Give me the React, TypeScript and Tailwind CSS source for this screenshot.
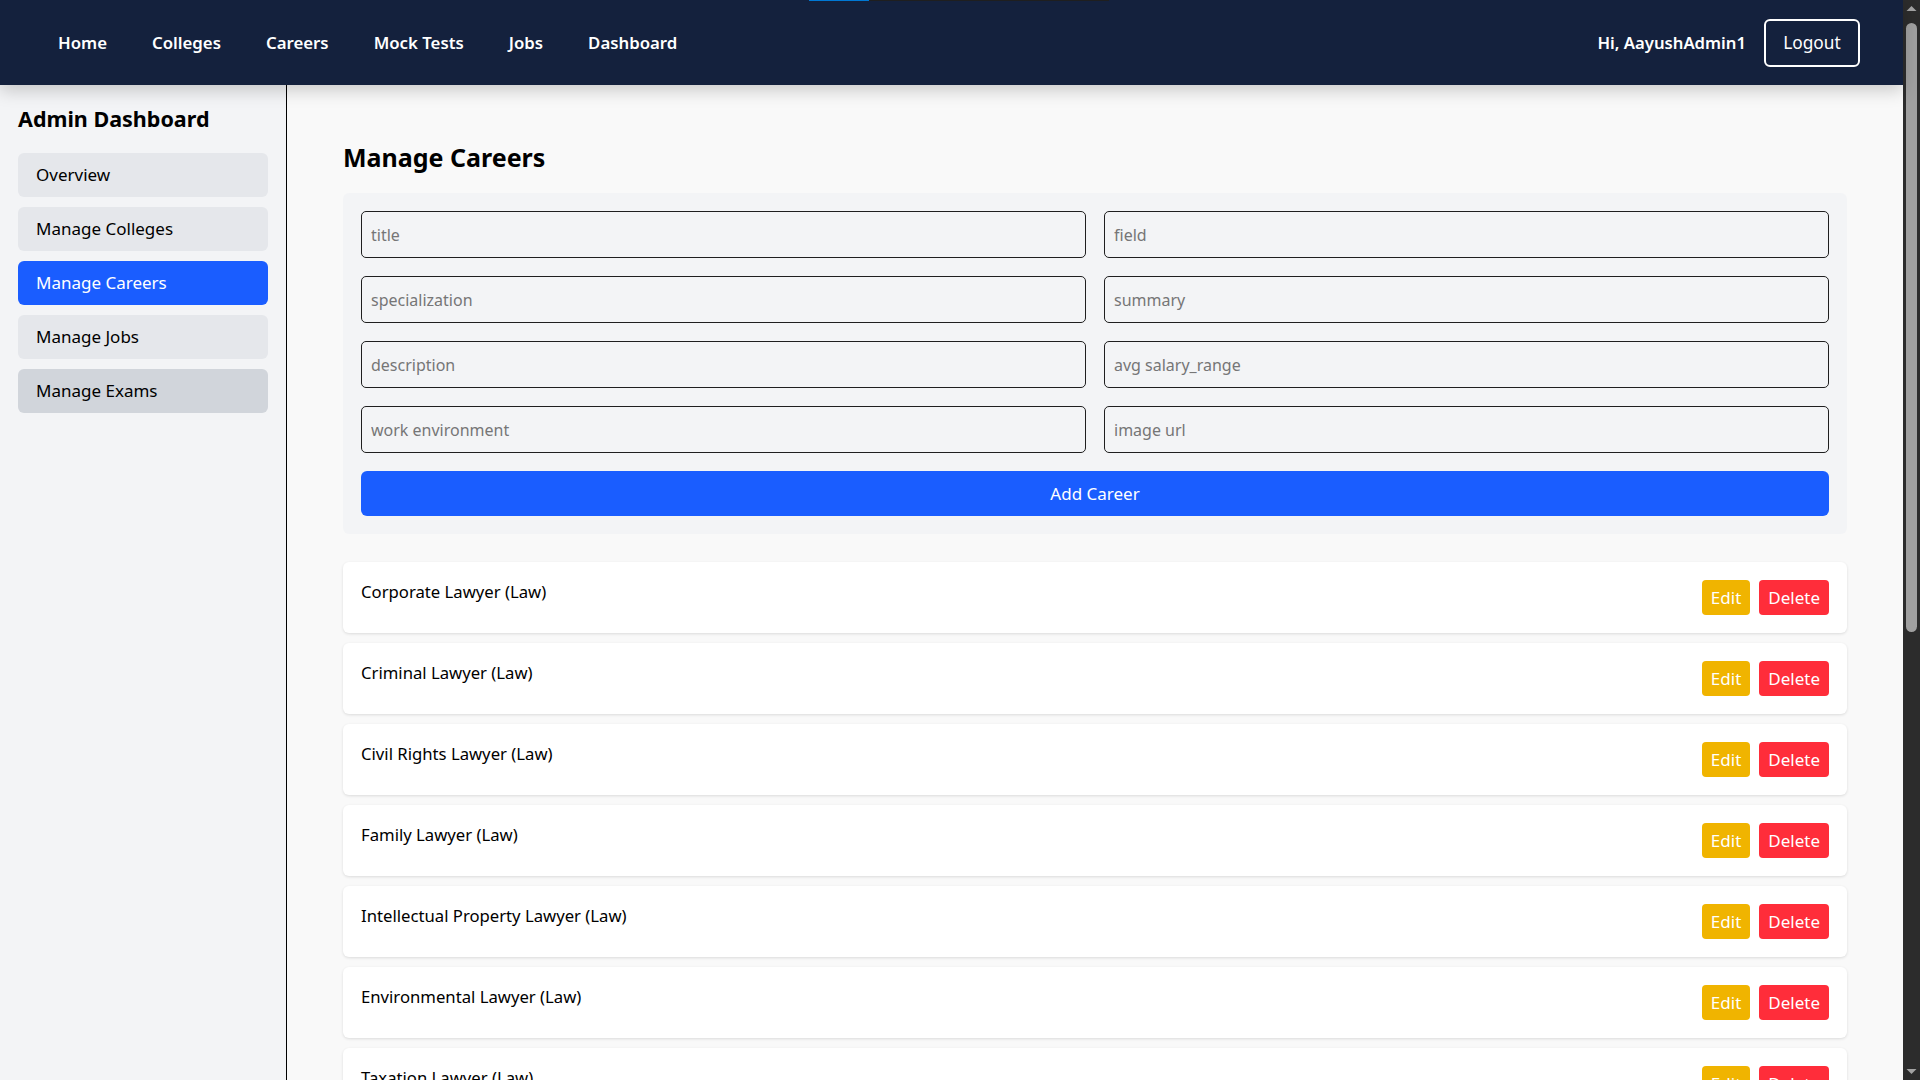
import React from "react"

const navLinks = ["Home", "Colleges", "Careers", "Mock Tests", "Jobs", "Dashboard"]

const sideItems = [
  { label: "Overview", tone: "bg-[#e5e7eb]" },
  { label: "Manage Colleges", tone: "bg-[#e5e7eb]" },
  { label: "Manage Careers", tone: "bg-[#1a5dff] text-white" },
  { label: "Manage Jobs", tone: "bg-[#e5e7eb]" },
  { label: "Manage Exams", tone: "bg-[#d1d5db]" },
]

const fields = [
  "title",
  "field",
  "specialization",
  "summary",
  "description",
  "avg salary_range",
  "work environment",
  "image url",
]

const careers = [
  "Corporate Lawyer (Law)",
  "Criminal Lawyer (Law)",
  "Civil Rights Lawyer (Law)",
  "Family Lawyer (Law)",
  "Intellectual Property Lawyer (Law)",
  "Environmental Lawyer (Law)",
  "Taxation Lawyer (Law)",
  "Immigration Lawyer (Law)",
]

export default function App() {
  return (
    <div
      className="h-screen w-full flex overflow-hidden bg-[#f9f9f9] text-black"
      style={{ fontFamily: '"Segoe UI", "Noto Sans", "Open Sans", sans-serif' }}
    >
      <div className="relative flex-1 flex flex-col min-w-0">
        {/* loading strip */}
        <div className="absolute top-0 left-[809px] h-px w-[60px] bg-[#0078d4] z-30" />
        <div className="absolute top-0 left-[869px] h-px w-[240px] bg-[#1f1f1f] z-30" />

        {/* Navbar */}
        <nav className="relative z-20 h-[85px] shrink-0 bg-[#14213d] shadow-[0_6px_16px_rgba(0,0,0,0.18)] flex items-center justify-between pl-[58px] pr-[43px]">
          <div className="flex items-center gap-[45px]">
            {navLinks.map((l) => (
              <span key={l} className="text-white text-[16.8px] font-semibold">
                {l}
              </span>
            ))}
          </div>
          <div className="flex items-center gap-[18px]">
            <span className="text-white text-[16.7px] font-semibold">Hi, AayushAdmin1</span>
            <button className="h-[48px] w-[96px] rounded-md border-2 border-white text-white text-[17.3px]">
              Logout
            </button>
          </div>
        </nav>

        <div className="flex flex-1 min-h-0">
          {/* Sidebar */}
          <aside className="w-[287px] shrink-0 bg-[#f3f4f6] border-r border-black p-[18px]">
            <h2 className="text-[21.5px] leading-8 font-bold mb-[18px]">Admin Dashboard</h2>
            <div className="flex flex-col gap-[10px]">
              {sideItems.map((s) => (
                <div key={s.label} className={`h-[44px] rounded-md px-[18px] flex items-center text-[17px] ${s.tone}`}>
                  {s.label}
                </div>
              ))}
            </div>
          </aside>

          {/* Main */}
          <main className="flex-1 min-w-0 px-[56px] pt-[56px]">
            <h1 className="text-[25px] leading-8 font-bold mb-[20px]">Manage Careers</h1>

            <div className="bg-[#f3f4f6] rounded-md p-[18px]">
              <div className="grid grid-cols-2 gap-[18px]">
                {fields.map((f) => (
                  <input
                    key={f}
                    placeholder={f}
                    className="h-[47px] rounded-[5px] border border-[#1f1f1f] bg-transparent px-[9px] text-[16px] placeholder:text-[#767676] outline-none"
                  />
                ))}
              </div>
              <button className="mt-[18px] h-[45px] w-full rounded-md bg-[#1a5dff] text-white text-[17px]">
                Add Career
              </button>
            </div>

            <div className="mt-[28px] flex flex-col gap-[10px]">
              {careers.map((c) => (
                <div
                  key={c}
                  className="bg-white rounded-md shadow-[0_1px_3px_rgba(0,0,0,0.12)] p-[18px] flex items-start justify-between"
                >
                  <span className="text-[16.7px] leading-6">{c}</span>
                  <div className="flex gap-[9px]">
                    <button className="h-[35px] px-[9px] rounded bg-[#f0b400] text-white text-[17px]">Edit</button>
                    <button className="h-[35px] px-[9px] rounded bg-[#ff2d3a] text-white text-[17px]">Delete</button>
                  </div>
                </div>
              ))}
            </div>
          </main>
        </div>
      </div>

      {/* page scrollbar */}
      <div className="w-[17px] shrink-0 h-screen bg-[#2c2c2c] flex flex-col items-center">
        <svg width="17" height="17" viewBox="0 0 17 17" className="shrink-0">
          <path d="M3.5 11 L8.5 6 L13.5 11 Z" fill="#a3a3a3" />
        </svg>
        <div className="w-[11px] h-[609px] mt-[6px] rounded-full bg-[#a0a0a0]" />
        <div className="flex-1" />
        <svg width="17" height="17" viewBox="0 0 17 17" className="shrink-0">
          <path d="M3.5 6 L8.5 11 L13.5 6 Z" fill="#a3a3a3" />
        </svg>
      </div>
    </div>
  )
}
